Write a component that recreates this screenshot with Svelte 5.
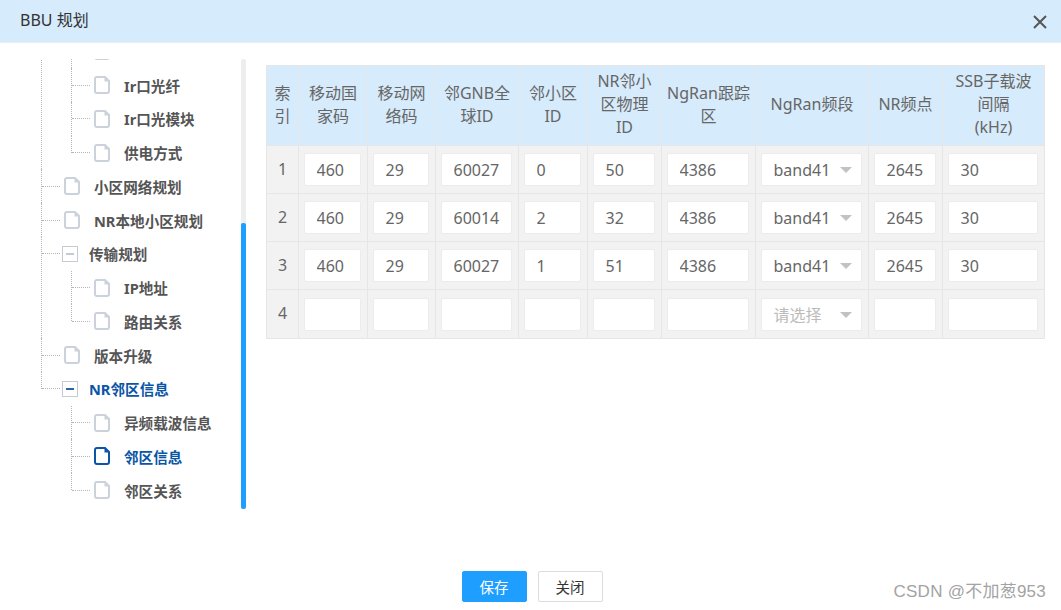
<script>
  const tree = [
    { label: '', open: true, children: [
      { label: '' },
      { label: 'Ir口光纤' },
      { label: 'Ir口光模块' },
      { label: '供电方式' },
    ]},
    { label: '小区网络规划' },
    { label: 'NR本地小区规划' },
    { label: '传输规划', open: true, children: [
      { label: 'IP地址' },
      { label: '路由关系' },
    ]},
    { label: '版本升级' },
    { label: 'NR邻区信息', open: true, active: true, children: [
      { label: '异频载波信息' },
      { label: '邻区信息', active: true },
      { label: '邻区关系' },
    ]},
  ];

  const columns = [
    { title: '索\n引', width: 32 },
    { title: '移动国\n家码', width: 69 },
    { title: '移动网\n络码', width: 68 },
    { title: '邻GNB全\n球ID', width: 83 },
    { title: '邻小区\nID', width: 69 },
    { title: 'NR邻小\n区物理\nID', width: 74 },
    { title: 'NgRan跟踪\n区', width: 94 },
    { title: 'NgRan频段', width: 113 },
    { title: 'NR频点', width: 74 },
    { title: 'SSB子载波\n间隔\n(kHz)', width: 102 },
  ];

  const rows = [
    ['460', '29', '60027', '0', '50', '4386', 'band41', '2645', '30'],
    ['460', '29', '60014', '2', '32', '4386', 'band41', '2645', '30'],
    ['460', '29', '60027', '1', '51', '4386', 'band41', '2645', '30'],
    ['', '', '', '', '', '', '', '', ''],
  ];
  const SELECT_COL = 6;
</script>

{#snippet fileIcon(active)}
  <svg class="file" class:active width="16" height="18" viewBox="0 0 16 18" fill="none">
    <path d="M3 1h8l4 4v10a2 2 0 0 1-2 2H3a2 2 0 0 1-2-2V3a2 2 0 0 1 2-2z" stroke="currentColor" stroke-width="2" />
    <path d="M10.5 1v4.5H15z" fill="currentColor" />
  </svg>
{/snippet}

<div class="dialog">
  <header class="title-bar">
    <h1>BBU 规划</h1>
    <button class="close" aria-label="关闭">
      <svg width="14" height="14" viewBox="0 0 14 14" fill="none">
        <path d="M1 1l12 12M13 1L1 13" stroke="#555" stroke-width="2" />
      </svg>
    </button>
  </header>

  <div class="body">
    <div class="tree-pane">
      <div class="tree-scroll">
        <ul class="tree">
          {#each tree as node}
            <li>
              <div class="node" class:active={node.active}>
                {#if node.children}
                  <span class="toggle" class:active={node.active}></span>
                  <span class="label folder">{node.label}</span>
                {:else}
                  {@render fileIcon(false)}
                  <span class="label">{node.label}</span>
                {/if}
              </div>
              {#if node.children}
                <ul class="children">
                  {#each node.children as leaf}
                    <li>
                      <div class="node" class:active={leaf.active}>
                        {@render fileIcon(leaf.active)}
                        <span class="label">{leaf.label}</span>
                      </div>
                    </li>
                  {/each}
                </ul>
              {/if}
            </li>
          {/each}
        </ul>
      </div>
      <div class="scrollbar"><div class="thumb"></div></div>
    </div>

    <div class="table-pane">
      <table>
        <colgroup>
          {#each columns as col}
            <col style="width: {col.width}px" />
          {/each}
        </colgroup>
        <thead>
          <tr>
            {#each columns as col}
              <th>{col.title}</th>
            {/each}
          </tr>
        </thead>
        <tbody>
          {#each rows as row, i}
            <tr>
              <td class="index">{i + 1}</td>
              {#each row as value, c}
                <td>
                  {#if c === SELECT_COL}
                    <div class="select">
                      <input readonly {value} placeholder="请选择" />
                      <span class="arrow"></span>
                    </div>
                  {:else}
                    <input {value} />
                  {/if}
                </td>
              {/each}
            </tr>
          {/each}
        </tbody>
      </table>
    </div>
  </div>

  <footer class="actions">
    <button class="btn primary">保存</button>
    <button class="btn">关闭</button>
  </footer>

  <div class="watermark">CSDN @不加葱953</div>
</div>

<style>
  :global(body) {
    background: #fff;
  }

  .dialog {
    position: relative;
    height: 610px;
    display: flex;
    flex-direction: column;
    overflow: hidden;
    font-family: "Noto Sans", "Noto Sans CJK SC", sans-serif;
    color: #666;
  }

  .title-bar {
    height: 43px;
    flex-shrink: 0;
    display: flex;
    align-items: center;
    justify-content: space-between;
    padding: 0 14px 0 20px;
    background: #d6ebfb;
    border-bottom: 1px solid #e4eef6;
    box-sizing: border-box;
  }

  h1 {
    margin: 0 0 4px;
    font-size: 16px;
    font-weight: 400;
    color: #333;
  }

  .close {
    display: flex;
    padding: 0;
    border: none;
    background: none;
    margin-top: 1px;
  }

  .body {
    display: flex;
    align-items: flex-start;
    height: 528px;
  }

  .tree-pane {
    display: flex;
    width: 246px;
    height: 450px;
    margin-top: 16px;
    flex-shrink: 0;
  }

  .tree-scroll {
    flex: 1;
    overflow: hidden;
  }

  .tree {
    margin: -58.3px 0 0;
    padding: 0 0 0 41px;
    list-style: none;
  }

  .tree li {
    position: relative;
  }

  .tree li::before {
    content: "";
    position: absolute;
    left: 0;
    top: 0;
    bottom: 0;
    border-left: 1px dotted #b5b5b5;
  }

  .tree li:last-child::before {
    bottom: auto;
    height: 17px;
  }

  .children {
    margin: 0;
    padding: 0 0 0 30px;
    list-style: none;
  }

  .node {
    position: relative;
    display: flex;
    align-items: center;
    height: 33.75px;
    padding-left: 23px;
    font-size: 14.6px;
    font-weight: 700;
    color: #555;
    white-space: nowrap;
  }

  .node::before {
    content: "";
    position: absolute;
    left: 1px;
    top: 16.5px;
    width: 18px;
    border-top: 1px dotted #b5b5b5;
  }

  .node.active {
    color: #0a55a5;
  }

  .file {
    flex-shrink: 0;
    color: #ccd2db;
  }

  .file.active {
    color: #0a55a5;
  }

  .label {
    margin-left: 14px;
  }

  .label.folder {
    margin-left: 11px;
  }

  .toggle {
    position: relative;
    width: 16px;
    height: 16px;
    margin-left: -2px;
    box-sizing: border-box;
    border: 1px solid #c5cbd5;
    flex-shrink: 0;
  }

  .toggle::after {
    content: "";
    position: absolute;
    left: 3px;
    right: 3px;
    top: 6px;
    height: 2px;
    background: #c5cbd5;
  }

  .toggle.active::after {
    background: #2b63a8;
  }

  .scrollbar {
    width: 5px;
    height: 100%;
    display: flex;
    align-items: flex-end;
    background: #eee;
    border-radius: 2px;
  }

  .thumb {
    width: 100%;
    height: 286px;
    background: #1e9fff;
    border-radius: 2px;
  }

  .table-pane {
    margin: 22px 0 0 20px;
  }

  table {
    width: 778px;
    table-layout: fixed;
    border-collapse: collapse;
  }

  th,
  td {
    border: 1px solid #e6e6e6;
    background: #f2f2f2;
    box-sizing: border-box;
  }

  th {
    height: 80px;
    padding: 0 0 2px;
    background: #d6ebfb;
    font-size: 16px;
    font-weight: 400;
    line-height: 23px;
    color: #666;
    white-space: pre;
  }

  td {
    height: 48px;
    padding: 7px 6.5px 7px 4.5px;
  }

  tr:last-child td {
    height: 49px;
    padding-top: 8px;
  }

  td.index,
  tr:last-child td.index {
    padding: 0 0 2px;
    font-size: 16px;
    text-align: center;
  }

  input {
    display: block;
    width: 100%;
    height: 33px;
    box-sizing: border-box;
    padding: 0 0 0 12px;
    border: 1px solid #ececec;
    border-radius: 2px;
    outline: none;
    background: #fff;
    font: inherit;
    font-size: 16px;
    color: #666;
  }

  input::placeholder {
    color: #bbb;
    opacity: 1;
  }

  .select {
    position: relative;
  }

  .select input {
    padding-right: 32px;
  }

  .arrow {
    position: absolute;
    right: 10px;
    top: 14px;
    border-style: solid;
    border-width: 6px 6.5px 0;
    border-color: #c2c2c2 transparent transparent;
  }

  .actions {
    display: flex;
    justify-content: center;
    gap: 11px;
    padding-left: 3px;
  }

  .btn {
    width: 65px;
    height: 31px;
    padding: 0;
    border: 1px solid #dcdcdc;
    border-radius: 2px;
    background: #fff;
    font: inherit;
    font-size: 14.5px;
    color: #333;
  }

  .btn.primary {
    border-color: #1e9fff;
    background: #1e9fff;
    color: #fff;
  }

  .watermark {
    position: absolute;
    right: 15px;
    bottom: 7px;
    font-family: "Liberation Sans", "Noto Sans CJK SC", sans-serif;
    font-size: 17px;
    line-height: 22px;
    letter-spacing: 0.25px;
    color: #a3a3a3;
    white-space: nowrap;
  }
</style>
